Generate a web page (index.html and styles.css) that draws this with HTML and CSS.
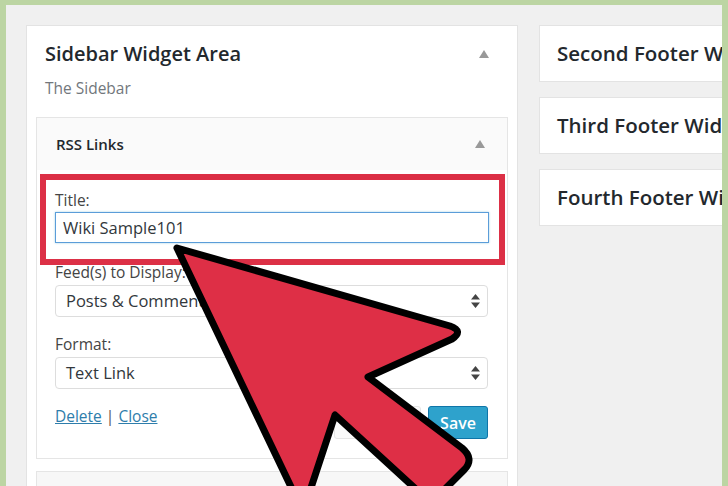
FILE: index.html
```html
<!DOCTYPE html>
<html lang="en">
<head>
  <meta charset="UTF-8">
  <title>Widgets</title>
  <link rel="stylesheet" href="styles.css">
</head>
<body>
  <div class="frame">
    <div class="columns">
      <!-- main sidebar area -->
      <section class="area">
        <div class="area-head">
          <h2>Sidebar Widget Area</h2>
          <svg class="toggle" width="10" height="8" viewBox="0 0 10 8"><path d="M5 0 L10 8 L0 8 Z"/></svg>
        </div>
        <p class="area-desc">The Sidebar</p>

        <div class="widget">
          <div class="widget-head">
            <h3>RSS Links</h3>
            <svg class="toggle" width="10" height="8" viewBox="0 0 10 8"><path d="M5 0 L10 8 L0 8 Z"/></svg>
          </div>
          <div class="widget-body">
            <div class="field highlight">
              <label>Title:</label>
              <div class="input">Wiki Sample101</div>
            </div>
            <div class="field">
              <label>Feed(s) to Display:</label>
              <div class="select">Posts &amp; Comments
                <svg class="updown" width="9" height="14" viewBox="0 0 9 14"><path d="M4.5 0 L9 5.5 L0 5.5 Z M0 8.5 L9 8.5 L4.5 14 Z"/></svg>
              </div>
            </div>
            <div class="field">
              <label>Format:</label>
              <div class="select">Text Link
                <svg class="updown" width="9" height="14" viewBox="0 0 9 14"><path d="M4.5 0 L9 5.5 L0 5.5 Z M0 8.5 L9 8.5 L4.5 14 Z"/></svg>
              </div>
            </div>
            <div class="actions">
              <div class="links"><a href="#">Delete</a> | <a href="#">Close</a></div>
              <div class="buttons">
                <span class="spinner"></span>
                <button class="save">Save</button>
              </div>
            </div>
          </div>
        </div>

        <div class="widget next"></div>
      </section>

      <!-- footer areas -->
      <div class="side">
        <div class="card">Second Footer Widget Area</div>
        <div class="card">Third Footer Widget Area</div>
        <div class="card">Fourth Footer Widget Area</div>
      </div>
    </div>

    <svg class="pointer" width="728" height="486" viewBox="0 0 728 486">
      <path d="M177 248 L450 326 Q464 331 452 339 L368 377 L462 448 Q475 459 464 470 L431 503 L335 415 L303 512 Z"
            fill="#de2f46" stroke="#000" stroke-width="7" stroke-linejoin="round"/>
    </svg>
  </div>
</body>
</html>
```

FILE: styles.css
```css
body {
  margin: 0;
  font-family: 'Open Sans', 'Liberation Sans', sans-serif;
  color: #23282d;
}

.frame {
  position: relative;
  width: 728px;
  height: 486px;
  box-sizing: border-box;
  border-top: 5px solid #bcd5a3;
  border-left: 6px solid #bcd5a3;
  border-right: 6px solid #bcd5a3;
  background: #f0f0f0;
  overflow: hidden;
}

.columns {
  display: flex;
  gap: 21px;
  padding: 20px 0 0 20px;
}

/* sidebar area */
.area {
  flex: 0 0 492px;
  box-sizing: border-box;
  height: 480px;
  background: #fff;
  border: 1px solid #e3e3e3;
}

.area-head {
  display: flex;
  justify-content: space-between;
  align-items: center;
  padding: 14px 28px 0 18px;
}

.area-head h2 {
  margin: 0;
  font-size: 20px;
  font-weight: 600;
  line-height: 28px;
}

.toggle {
  fill: #999;
}

.area-desc {
  margin: 9px 0 0 18px;
  font-size: 15.5px;
  color: #72777c;
  line-height: 22px;
}

.widget {
  margin: 18px 9px 0 9px;
  border: 1px solid #e5e5e5;
  background: #fff;
}

.widget-head {
  display: flex;
  justify-content: space-between;
  align-items: center;
  height: 52px;
  padding: 0 22px 0 19px;
  background: #fafafa;
}

.widget-head h3 {
  margin: 0;
  font-size: 15px;
  font-weight: 600;
}

.widget-body {
  padding: 4px 2px 19px 3px;
}

.field {
  padding: 0 16px 0 15px;
}

.field label {
  display: block;
  font-size: 15.5px;
  color: #444;
  line-height: 20px;
  margin: 17px 0 3px;
}

.highlight {
  border: 6px solid #dc3046;
  padding: 10px 10px 16px 9px;
  margin-bottom: -20px;
}

.highlight label {
  margin: 0 0 2px;
}

.input {
  height: 31px;
  box-sizing: border-box;
  border: 1px solid #5b9dd9;
  box-shadow: 0 0 2px rgba(30, 140, 190, 0.4);
  padding: 0 7px;
  font-size: 16.5px;
  line-height: 29px;
  color: #32373c;
}

.select {
  position: relative;
  height: 32px;
  box-sizing: border-box;
  border: 1px solid #ddd;
  border-radius: 4px;
  padding: 0 10px;
  font-size: 16.5px;
  line-height: 30px;
  color: #32373c;
  margin-right: 1px;
}

.updown {
  position: absolute;
  right: 7px;
  top: 8px;
  fill: #444;
}

.actions {
  display: flex;
  justify-content: space-between;
  align-items: center;
  padding: 17px 17px 0 15px;
}

.links {
  font-size: 15.5px;
  color: #555;
  margin-top: -14px;
}

.links a {
  color: #2e7dab;
}

.buttons {
  display: flex;
  gap: 7px;
}

.spinner {
  width: 85px;
  height: 31px;
  border: 1px solid #e6e6e6;
  border-radius: 3px;
  background: #fafafa;
}

.save {
  width: 60px;
  height: 33px;
  border: 1px solid #0f75a8;
  border-radius: 3px;
  background: #2ea2cc;
  color: #fff;
  font-family: 'Open Sans', 'Liberation Sans', sans-serif;
  font-size: 16px;
  font-weight: 600;
}

.widget.next {
  height: 40px;
  margin-top: 12px;
  background: #f7f7f7;
}

/* right column */
.side {
  flex: 0 0 260px;
  display: flex;
  flex-direction: column;
  gap: 15px;
}

.card {
  height: 57px;
  box-sizing: border-box;
  background: #fff;
  border: 1px solid #e3e3e3;
  padding: 0 0 0 17px;
  font-size: 20.5px;
  font-weight: 600;
  line-height: 55px;
  white-space: nowrap;
}

.pointer {
  position: absolute;
  left: -6px;
  top: -5px;
  pointer-events: none;
}
```
